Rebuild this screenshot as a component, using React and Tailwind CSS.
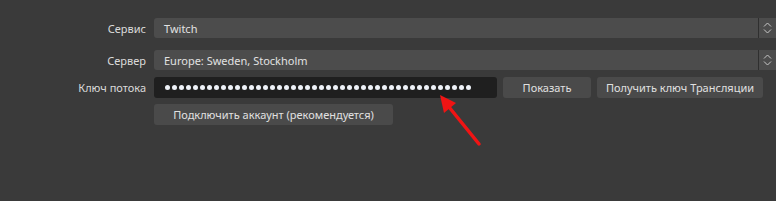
import React from 'react';

function Spinner() {
  return (
    <div className="flex h-full w-[18px] flex-col items-center justify-center border-l border-[#2f2f2f]">
      <svg width="9" height="14" viewBox="0 0 9 14" fill="none" stroke="#c8c8c8" strokeWidth="1">
        <path d="M1 5.5 L4.5 2 L8 5.5" />
        <path d="M1 8.5 L4.5 12 L8 8.5" />
      </svg>
    </div>
  );
}

function ComboRow({ label, value, className }) {
  return (
    <div className={`flex h-[20px] items-center ${className || ''}`}>
      <div className="w-[147px] pr-[1px] text-right text-[#dadada]">{label}</div>
      <div className="ml-[7px] flex h-full flex-1 items-center rounded-l-[3px] bg-[#4c4c4c]">
        <div className="flex-1 pl-[10px] text-[#e2e2e2]">{value}</div>
        <Spinner />
      </div>
    </div>
  );
}

export default function App() {
  const dots = Array.from({ length: 44 });

  return (
    <div className="relative h-[201px] w-[776px] overflow-hidden bg-[#3a3a3a] font-['Noto_Sans',sans-serif] text-[11px] leading-none">
      <div className="flex flex-col pt-[18px]">
        <ComboRow label="Сервис" value="Twitch" />
        <ComboRow label="Сервер" value="Europe: Sweden, Stockholm" className="mt-[12px]" />

        <div className="mt-[7px] flex h-[21px] items-center">
          <div className="w-[147px] pr-[1px] text-right text-[#dadada]">Ключ потока</div>
          <div className="ml-[7px] flex h-full w-[343px] items-center gap-[2px] rounded-[3px] bg-[#1f1f1f] pl-[11px]">
            {dots.map((_, i) => (
              <span key={i} className="h-[5px] w-[5px] rounded-full bg-[#eef2f8]" />
            ))}
          </div>
          <button className="ml-[6px] h-full w-[88px] rounded-[3px] bg-[#4a4a4a] text-[#e0e0e0]">Показать</button>
          <button className="ml-[6px] h-full w-[166px] rounded-[3px] bg-[#4a4a4a] text-[#e0e0e0]">
            Получить ключ Трансляции
          </button>
        </div>

        <div className="mt-[6px] flex h-[21px]">
          <button className="ml-[154px] h-full w-[239px] rounded-[3px] bg-[#4a4a4a] text-[#e0e0e0]">
            Подключить аккаунт (рекомендуется)
          </button>
        </div>
      </div>

      <svg className="absolute left-0 top-0" width="776" height="201" viewBox="0 0 776 201">
        <line x1="449" y1="107" x2="479" y2="144" stroke="#f01414" strokeWidth="3.5" strokeLinecap="round" />
        <polygon points="440,95 444,113 456,103" fill="#f01414" />
      </svg>
    </div>
  );
}
